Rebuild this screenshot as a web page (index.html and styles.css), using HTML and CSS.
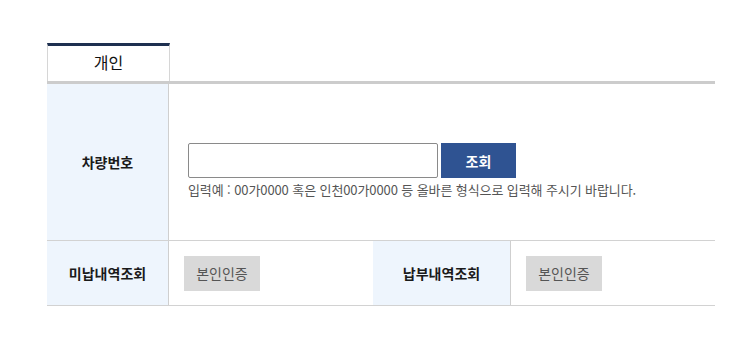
FILE: index.html
```html
<!DOCTYPE html>
<html lang="ko">
<head>
<meta charset="utf-8">
<link rel="stylesheet" href="styles.css">
</head>
<body>
<div class="wrap">
  <div class="tabs">
    <div class="tab active">개인</div>
  </div>
  <div class="table">
    <div class="row row-car">
      <div class="th">차량번호</div>
      <div class="td td-car">
        <div class="search">
          <input class="inp" type="text">
          <button class="btn-search">조회</button>
        </div>
        <p class="help">입력예 : 00가0000 혹은 인천00가0000 등 올바른 형식으로 입력해 주시기 바랍니다.</p>
      </div>
    </div>
    <div class="row row-auth">
      <div class="th">미납내역조회</div>
      <div class="td"><button class="btn-auth">본인인증</button></div>
      <div class="th th2">납부내역조회</div>
      <div class="td"><button class="btn-auth">본인인증</button></div>
    </div>
  </div>
</div>
</body>
</html>
```

FILE: styles.css
```css
* { box-sizing: border-box; }
html, body { margin: 0; padding: 0; background: #fff; }
body {
  font-family: "Noto Sans CJK KR", "Noto Sans", sans-serif;
  color: #222;
}
.wrap {
  margin: 43px 0 0 47px;
  width: 668px;
}
.tabs {
  display: flex;
  border-bottom: 3px solid #cccccc;
}
.tab {
  width: 123px;
  height: 38px;
  border-top: 3px solid #1e3050;
  border-left: 1px solid #d6d6d6;
  border-right: 1px solid #d6d6d6;
  display: flex;
  align-items: center;
  justify-content: center;
  font-size: 16px;
  color: #111;
  padding-bottom: 3px;
}
.row {
  display: grid;
  border-bottom: 1px solid #d2d2d2;
}
.row-car {
  grid-template-columns: 122px 1fr;
  height: 157px;
}
.row-auth {
  grid-template-columns: 122px 204px 138px 1fr;
  height: 65px;
}
.th {
  background: #eef5fd;
  border-right: 1px solid #cfcfcf;
  display: flex;
  align-items: center;
  justify-content: center;
  font-weight: bold;
  font-size: 14px;
  color: #1a1a1a;
}
.td {
  display: flex;
  align-items: center;
  padding-left: 15px;
}
.td-car {
  flex-direction: column;
  align-items: flex-start;
  justify-content: flex-start;
  padding-left: 19px;
  padding-top: 59px;
}
.search { display: flex; gap: 3px; }
.inp {
  width: 250px;
  height: 35px;
  border: 1px solid #8a8a8a;
  border-radius: 2px;
  margin: 0;
  padding: 0 6px;
  font: inherit;
}
.btn-search {
  width: 75px;
  height: 35px;
  border: 0;
  margin: 0;
  background: #2f5392;
  color: #fff;
  font-family: inherit;
  font-size: 14px;
  font-weight: bold;
  cursor: pointer;
}
.help {
  margin: 2px 0 0 0;
  font-size: 13px;
  color: #555;
  letter-spacing: -0.1px;
}
.btn-auth {
  width: 76px;
  height: 35px;
  border: 0;
  margin: 0;
  background: #d9d9d9;
  color: #555;
  font-family: inherit;
  font-size: 14px;
  cursor: pointer;
}
```
